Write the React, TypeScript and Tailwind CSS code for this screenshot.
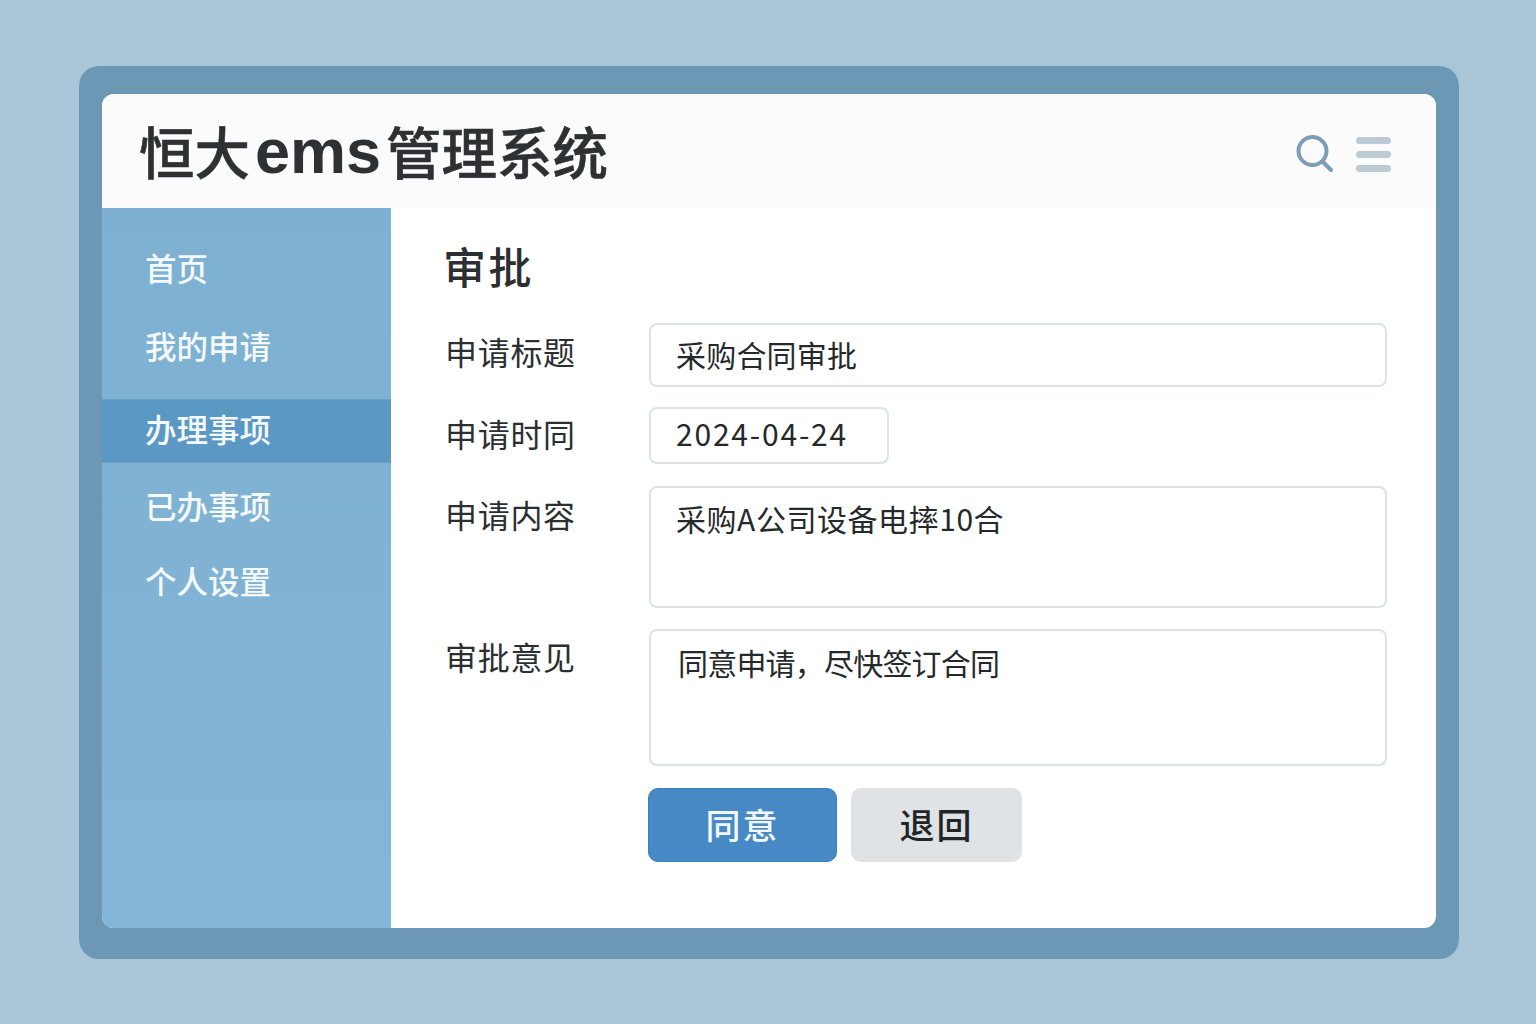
const FONT = "font-['Noto_Sans_CJK_SC','Noto_Sans',sans-serif]";

const navItems = [
  { label: "首页", cls: "h-[80px]" },
  { label: "我的申请", cls: "h-[76px]" },
  { label: "办理事项", cls: "mt-[15px] h-[64px] border-y border-[#6f9fc2] bg-[#5c98c4] pb-[5px]" },
  { label: "已办事项", cls: "h-[89px] pb-[4px]" },
  { label: "个人设置", cls: "h-[61px] pb-[3px]" },
];

function Label({ children, cls }: { children: string; cls: string }) {
  return <div className={`-ml-[2px] w-[204px] shrink-0 text-[32px] leading-[44px] tracking-[0.7px] text-[#2c2f31] ${cls}`}>{children}</div>;
}

export default function App() {
  return (
    <div className={`${FONT} min-h-screen w-full bg-[#a8c6d8] pl-[79px] pt-[66px]`}>
      <div className="h-[893px] w-[1380px] rounded-[20px] bg-[#6c98b6] px-[23px] pb-[31px] pt-[28px]">
        <div className="flex h-full flex-col overflow-hidden rounded-[12px] bg-white">
          <header className="flex h-[114px] shrink-0 items-center justify-between bg-[#fbfbfb] pl-[37px] pr-[45px]">
            <h1 className="flex items-center text-[55.5px] font-medium leading-none text-[#2d3133] [-webkit-text-stroke:0.6px_#2d3133]">
              恒大<span className="mx-[5px] font-['Liberation_Sans'] text-[63px] font-bold tracking-[0px] [-webkit-text-stroke:0px]">ems</span>管理系统
            </h1>
            <div className="mt-[7px] flex items-center gap-[20px]">
              <svg width="40" height="40" viewBox="0 0 40 40" fill="none" stroke="#7c9db5">
                <circle cx="16.5" cy="16" r="14" strokeWidth="4" />
                <path d="M26.5 26.5 L35 35" strokeWidth="4" strokeLinecap="round" />
              </svg>
              <div className="flex w-[35px] flex-col gap-[7px]">
                <div className="h-[7px] rounded-full bg-[#bccbd3]" />
                <div className="h-[7px] rounded-full bg-[#bccbd3]" />
                <div className="h-[7px] rounded-full bg-[#bccbd3]" />
              </div>
            </div>
          </header>
          <div className="flex min-h-0 flex-1">
            <aside className="w-[289px] shrink-0 bg-linear-to-b from-[#7db0d1] to-[#85b5d7] pt-[20px]">
              {navItems.map((item) => (
                <div
                  key={item.label}
                  className={`flex items-center pl-[43px] text-[31.5px] font-medium text-[#f4f9fc] ${item.cls}`}
                >
                  {item.label}
                </div>
              ))}
            </aside>
            <main className="flex-1 pl-[56px] pr-[49px] pt-[25px]">
              <h2 className="-ml-[4px] h-[90px] text-[43px] font-medium leading-[64px] tracking-[2.5px] text-[#2c2f31]">审批</h2>
              <div className="flex h-[64px]">
                <Label cls="pt-[6px]">申请标题</Label>
                <div className="flex h-[64px] flex-1 items-center rounded-[8px] border-2 border-[#dfe2e4] pb-[2px] pl-[25px] text-[30px] tracking-[0.2px] text-[#26292b]">采购合同审批</div>
              </div>
              <div className="mt-[20px] flex h-[57px]">
                <Label cls="pt-[4px]">申请时同</Label>
                <div className="flex h-[57px] w-[240px] items-center rounded-[8px] border-2 border-[#dfe2e4] pb-[4px] pl-[25px] text-[30px] tracking-[1.8px] text-[#26292b]">2024-04-24</div>
              </div>
              <div className="mt-[22px] flex h-[122px]">
                <Label cls="pt-[6px]">申请内容</Label>
                <div className="h-[122px] flex-1 rounded-[8px] border-2 border-[#dfe2e4] pl-[25px] pt-[8px] text-[30px] leading-[44px] tracking-[0.55px] text-[#26292b]">采购A公司设备电摔10合</div>
              </div>
              <div className="mt-[21px] flex h-[137px]">
                <Label cls="pt-[5px]">审批意见</Label>
                <div className="h-[137px] flex-1 rounded-[8px] border-2 border-[#dfe2e4] pl-[27px] pt-[9px] text-[30px] leading-[44px] tracking-[-0.8px] text-[#26292b]">同意申请，尽快签订合同</div>
              </div>
              <div className="ml-[201px] mt-[22px] flex gap-[14px]">
                <button className="flex h-[74px] w-[189px] items-center justify-center rounded-[10px] border border-[#3a7fb8] bg-[#4689c4] pb-[2px] text-[35px] font-medium tracking-[2px] text-[#f2f7fb]">同意</button>
                <button className="flex h-[74px] w-[171px] items-center justify-center rounded-[10px] bg-[#e0e3e5] pb-[2px] text-[35px] font-medium tracking-[2px] text-[#222527]">退回</button>
              </div>
            </main>
          </div>
        </div>
      </div>
    </div>
  );
}
